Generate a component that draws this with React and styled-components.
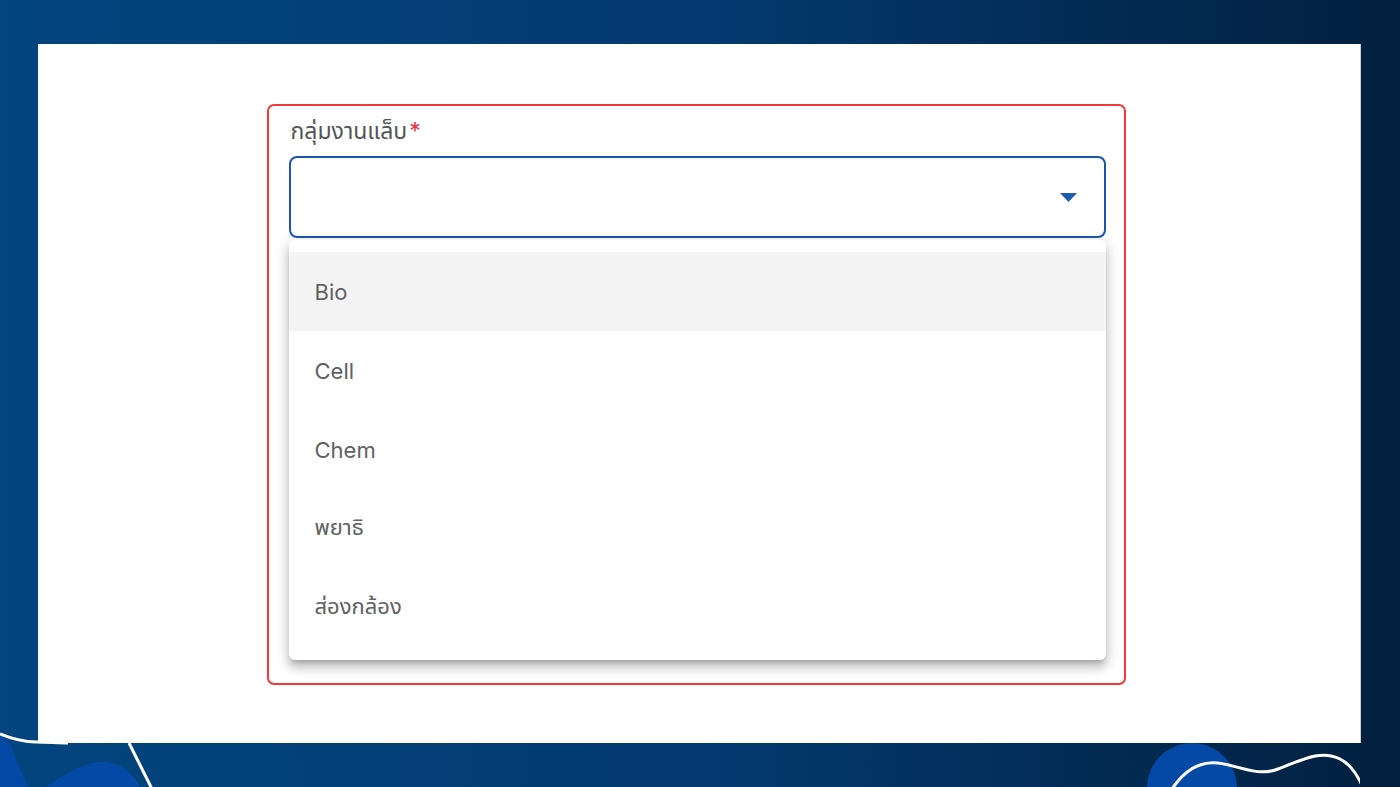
import React from "react";
import styled, { createGlobalStyle } from "styled-components";

const options = ["Bio", "Cell", "Chem", "พยาธิ", "ส่องกล้อง"];

function App() {
    return (
        <React.Fragment>
            <GlobalStyle />
            <Page>
                <Panel>
                    <FieldBox>
                        <Label>
                            กลุ่มงานแล็บ<Required>*</Required>
                        </Label>
                        <SelectBox>
                            <svg width="17" height="9" viewBox="0 0 17 9">
                                <path d="M0 0 L17 0 L8.5 9 Z" fill="#1d5bb5" />
                            </svg>
                        </SelectBox>
                        <Menu>
                            {options.map((opt, i) => (
                                <MenuItem key={opt} active={i === 0}>
                                    {opt}
                                </MenuItem>
                            ))}
                        </Menu>
                    </FieldBox>
                </Panel>
                <DecoLeft width="200" height="60" viewBox="0 0 200 60">
                    <path d="M0 8 L0 60 L28 60 C22 48 16 32 10 16 Z" fill="#0449a6" />
                    <path d="M46 60 C68 44 88 34 106 35 C122 36 134 48 140 60 Z" fill="#0449a6" />
                    <path d="M0 7 C12 12 22 15 36 15 C48 15 58 16 68 16" stroke="#fff" strokeWidth="3" fill="none" />
                    <path d="M129 16 L152 62" stroke="#fff" strokeWidth="3" fill="none" />
                </DecoLeft>
                <DecoRight width="260" height="50" viewBox="0 0 260 50">
                    <circle cx="92" cy="51" r="45" fill="#0449a6" />
                    <path
                        d="M72 52 C84 34 100 24 118 26 C140 29 158 40 178 32 C200 24 220 12 240 22 C252 28 258 40 264 52"
                        stroke="#fff"
                        strokeWidth="3"
                        fill="none"
                    />
                </DecoRight>
            </Page>
        </React.Fragment>
    );
}

const GlobalStyle = createGlobalStyle`
    body {
        margin: 0;
        font-family: Inter, "Noto Sans", "Noto Sans Thai", sans-serif;
    }
`;

const Page = styled.div`
    position: relative;
    box-sizing: border-box;
    width: 1400px;
    height: 787px;
    padding: 44px 39px 44px 38px;
    overflow: hidden;
    background: linear-gradient(90deg, #03457f 0%, #033a70 50%, #02203f 100%);
`;

const Panel = styled.div`
    height: 100%;
    background: #fff;
    border-right: 1px solid #c9ccd3;
    display: flex;
    justify-content: center;
    align-items: flex-start;
    padding: 60px 6px 0 0;
    box-sizing: border-box;
`;

const FieldBox = styled.div`
    width: 859px;
    box-sizing: border-box;
    border: 2px solid #f23838;
    border-radius: 7px;
    padding: 11px 18px 23px 20px;
    display: flex;
    flex-direction: column;
`;

const Label = styled.div`
    font-size: 23px;
    line-height: 28px;
    color: #555;
    padding-left: 2px;
    margin-bottom: 11px;
`;

const Required = styled.span`
    color: #e8343f;
    margin-left: 2px;
`;

const SelectBox = styled.div`
    height: 82px;
    box-sizing: border-box;
    border: 2px solid #1a56b0;
    border-radius: 8px;
    display: flex;
    align-items: center;
    justify-content: flex-end;
    padding-right: 27px;
`;

const Menu = styled.div`
    margin-top: 2px;
    background: #fff;
    border-radius: 6px;
    padding: 12px 0 13px;
    box-shadow: 0 5px 5px -3px rgba(0, 0, 0, 0.2), 0 8px 10px 1px rgba(0, 0, 0, 0.14),
        0 3px 14px 2px rgba(0, 0, 0, 0.12);
`;

const MenuItem = styled.div`
    height: 79px;
    display: flex;
    align-items: center;
    padding-left: 26px;
    font-size: 22px;
    color: #616161;
    background: ${props => (props.active ? "#f4f4f4" : "transparent")};
`;

const DecoLeft = styled.svg`
    position: absolute;
    left: 0;
    bottom: 0;
`;

const DecoRight = styled.svg`
    position: absolute;
    left: 1100px;
    bottom: 0;
`;

export default App;
